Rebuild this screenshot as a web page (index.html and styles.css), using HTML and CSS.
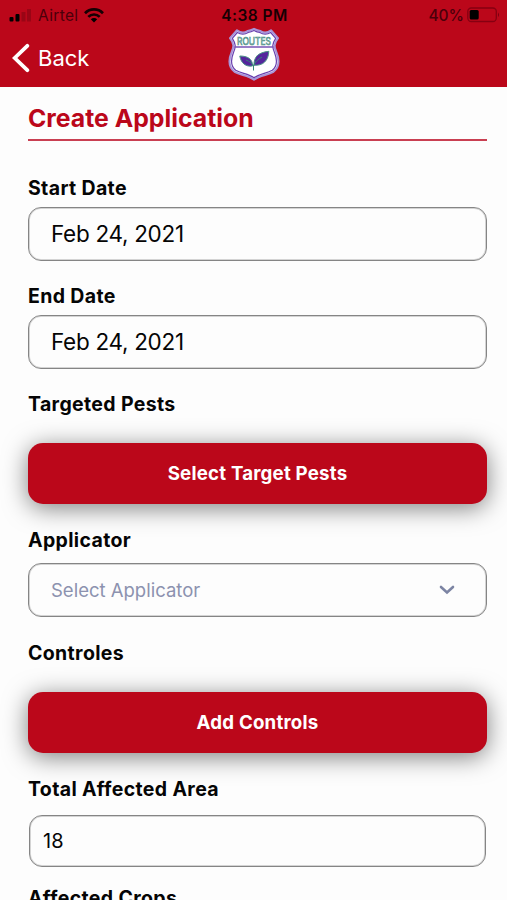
FILE: index.html
```html
<!DOCTYPE html>
<html lang="en">
<head>
<meta charset="utf-8">
<meta name="viewport" content="width=device-width, initial-scale=1">
<title>Create Application</title>
<link rel="stylesheet" href="styles.css">
</head>
<body>
<header class="header">
  <div class="status">
    <div class="carrier">
      <svg class="signal" width="22" height="14" viewBox="0 0 22 14"><rect x="0.500" y="9" width="4" height="4.500" rx="1"/><rect x="6.500" y="6" width="4" height="7.500" rx="1"/><path opacity=".18" d="M12.500 4h4v9.500h-4zM18 1h4v12.500h-4z"/></svg>
      <span class="carrier-name">Airtel</span>
      <svg class="wifi" width="20" height="15" viewBox="0 0 20 15"><g fill="none" stroke="#160003" stroke-width="2.700"><path d="M1 5.200C6 .2 14 .2 19 5.200"/><path d="M4.300 8.900c3.200-3.200 8.200-3.200 11.400 0"/></g><path d="M10 14.500l-3.200-3.200c1.800-1.700 4.600-1.700 6.400 0z"/></svg>
    </div>
    <span class="time">4:38 PM</span>
    <div class="power">
      <span class="percent">40%</span>
      <svg width="33" height="16" viewBox="0 0 33 16"><rect x=".8" y="1" width="28.500" height="13.500" rx="3.500" fill="none" stroke="#860011" stroke-width="1.300"/><rect x="2.700" y="3" width="9" height="9.500" rx="1.500" fill="#000"/><path d="M31 5.500q2 2.300 0 4.600z" fill="#78000f"/></svg>
    </div>
  </div>
  <nav class="nav">
    <a class="back"><svg width="18" height="30" viewBox="0 0 18 30"><path d="M15.300 2.800L2.700 15l12.600 12.200" fill="none" stroke="#fff" stroke-width="3.800" stroke-linecap="round" stroke-linejoin="miter"/></svg><span>Back</span></a>
    <svg class="logo" width="52" height="54" viewBox="0 0 52 54">
      <path d="M9 3.200C12.500 6 16.500 6 19.500 4Q22.500 3.500 26 1.800Q29.500 3.500 32.500 4C35.500 6 39.500 6 43 3.200L50 11.200C46 16.500 45.800 19.500 48.300 25C51.700 33 51.600 40 45.500 44.800C39.500 48.200 31.500 48.200 26 52.800C20.500 48.200 12.500 48.200 6.500 44.800C.4 40 .3 33 3.700 25C6.200 19.500 6 16.500 2 11.200Z" fill="#fff" stroke="#a894d8" stroke-width="2" stroke-linejoin="round"/>
      <path d="M9.300 5.500C13 7.600 17 7.500 20.200 5.400Q23 5 26 3.500Q29 5 31.800 5.400C35 7.500 39 7.600 42.700 5.500L47.700 11.300C44.200 16.500 44 20 46.500 25.500C49.500 33 49.400 39 44.300 43.200C38.500 46.400 31.500 46.700 26 50.700C20.500 46.700 13.500 46.400 7.700 43.200C2.600 39 2.500 33 5.500 25.500C8 20 7.800 16.500 4.300 11.300Z" fill="none" stroke="#683fae" stroke-width="1.200" stroke-linejoin="round"/>
      <path d="M6.500 20h39" stroke="#7953b6" stroke-width="1.300"/>
      <text class="logo-text" x="9" y="17.500" textLength="34" lengthAdjust="spacingAndGlyphs">ROUTES</text>
      <g stroke="#4a9485" stroke-width="1" fill="#54269c" stroke-linejoin="round"><path d="M24.500 39c-7 1-11.500-3-12.700-10 7.500 0 13 2.800 12.700 10z"/><path d="M26 38.200c-.2-8.200 4-12.700 14.800-13.900-.4 9.500-5.800 14.600-14.800 13.900z"/></g>
      <path d="M18 33c3.500 1.500 6.500 3 7.500 6v4.500M34 30c-4 2.500-7.200 4.800-8.500 9" fill="none" stroke="#348576" stroke-width="1"/>
    </svg>
  </nav>
</header>
<main class="form">
  <h1 class="title">Create Application</h1>
  <section class="group">
    <div class="label">Start Date</div>
    <div class="field">Feb 24, 2021</div>
  </section>
  <section class="group">
    <div class="label">End Date</div>
    <div class="field">Feb 24, 2021</div>
  </section>
  <section class="group roomy">
    <div class="label">Targeted Pests</div>
    <button class="button">Select Target Pests</button>
  </section>
  <section class="group roomy">
    <div class="label">Applicator</div>
    <div class="field select"><span>Select Applicator</span><svg width="16" height="10" viewBox="0 0 16 10"><path d="M2 2l6 5.500L14 2" fill="none" stroke="#7c84a3" stroke-width="2.600" stroke-linecap="round" stroke-linejoin="miter"/></svg></div>
  </section>
  <section class="group roomy">
    <div class="label">Controles</div>
    <button class="button">Add Controls</button>
  </section>
  <section class="group area">
    <div class="label">Total Affected Area</div>
    <div class="field number">18</div>
  </section>
  <div class="label">Affected Crops</div>
</main>
</body>
</html>
```
FILE: styles.css
```css
* { box-sizing: border-box; }
body {
  margin: 0;
  height: 900px;
  overflow: hidden;
  background: #fdfdfd;
  color: #050505;
  font-family: Inter, "Liberation Sans", sans-serif;
}
.header { height: 87px; background: #bb071a; }
.status {
  height: 29px;
  padding: 1px 7px 0 9px;
  display: grid;
  grid-template-columns: 1fr auto 1fr;
  align-items: center;
  color: #160003;
}
.carrier, .power { display: flex; align-items: center; }
.carrier-name { margin-left: 7px; color: #4b000a; font-size: 15.5px; letter-spacing: .35px; }
.wifi { margin-left: 6px; }
.time { font-size: 15.5px; font-weight: 600; letter-spacing: .5px; }
.power { justify-content: flex-end; gap: 3px; }
.percent { color: #4b000a; font-weight: 500; font-size: 15.5px; }
.nav { height: 58px; display: grid; grid-template-columns: 1fr 52px 1fr; }
.back { display: flex; align-items: center; gap: 8px; height: 57px; padding-left: 12px; color: #fff; font-size: 22px; }
.logo { margin: -2px 0 0 .5px; }
.logo-text { font-size: 11px; font-weight: 400; fill: #eef5f4; stroke: #438a80; stroke-width: .7px; }
.form { padding: 0 20px 0 28px; }
.title {
  display: flex;
  align-items: center;
  height: 54px;
  margin: 0 0 36px;
  padding-top: 10px;
  border-bottom: 2px solid #c93f52;
  color: #bb071a;
  font-size: 24.8px;
  font-weight: 700;
  line-height: 32px;
}
.group { margin-bottom: 24px; }
.roomy { margin-bottom: 25px; }
.area { margin-bottom: 20px; }
.label { height: 24px; line-height: 22px; font-size: 19.5px; font-weight: 700; letter-spacing: .35px; }
.field {
  display: flex;
  align-items: center;
  height: 54px;
  margin-top: 6px;
  padding: 0 23px 1px 22px;
  border: 1px solid #858585;
  border-radius: 13px;
  box-shadow: inset 0 0 0 1px rgba(120, 120, 120, .3);
  font-size: 22.5px;
  letter-spacing: -.3px;
}
.button {
  display: block;
  width: 100%;
  height: 61px;
  margin-top: 26px;
  padding: 0 6px;
  border: 0;
  border-radius: 15px;
  background: #bb071a;
  box-shadow: 0 4px 25px rgba(0, 0, 0, .5);
  color: #fff;
  font: 700 18.7px Inter, "Liberation Sans", sans-serif;
  letter-spacing: .2px;
}
.select { justify-content: space-between; margin-top: 10px; padding: 0 31px 1px 22px; color: #8c92af; font-size: 18.5px; letter-spacing: 0; }
.number { height: 52px; margin: 13px 1px 0; padding: 0 13px; font-size: 20px; letter-spacing: 0; }
```
